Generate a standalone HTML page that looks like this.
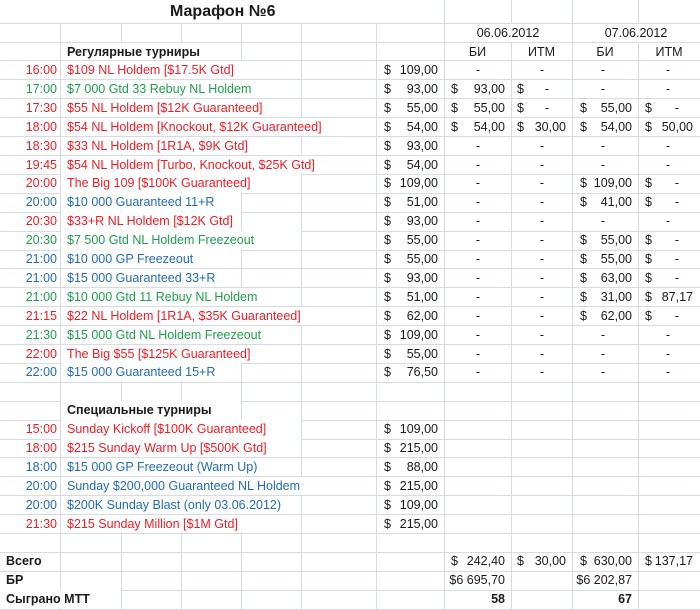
<!DOCTYPE html>
<html><head><meta charset="utf-8"><style>
*{margin:0;padding:0}
body{width:700px;height:610px;overflow:hidden;background:#fff;position:relative;font-family:"Liberation Sans","DejaVu Sans",sans-serif;font-size:12.5px;color:#1a1a1a}
.vl{position:absolute;top:0;width:1px;height:610px;background:#d6dbe4}
.hl{position:absolute;left:0;width:700px;height:1px;background:#d6dbe4}
.r{position:absolute;left:0;width:700px;height:18.9px}
.r>div{position:absolute;top:0;height:17.9px;line-height:19px;white-space:nowrap}
.w{background:#fff}
.t{left:0;width:57px;text-align:right}
.n{left:67px}
.R{color:#f01c24}.G{color:#1fa04b}.B{color:#236cb5}
.fD{left:384px}.fV{left:376px;width:62px;text-align:right}
.gD{left:451px}.gV{left:444px;width:61px;text-align:right}
.hD{left:517px}.hV{left:511px;width:55px;text-align:right}
.iD{left:580px}.iV{left:572px;width:60px;text-align:right}
.jD{left:645px}.jV{left:638px;width:55px;text-align:right}
.gX{left:473px;width:10px;text-align:center}
.hX{left:537px;width:10px;text-align:center}
.iX{left:598px;width:10px;text-align:center}
.jX{left:663px;width:10px;text-align:center}
.hY{left:542px;width:10px;text-align:center}
.jY{left:672px;width:10px;text-align:center}
.b{font-weight:bold}
</style></head><body>
<div class="vl" style="left:60px"></div><div class="vl" style="left:121px"></div><div class="vl" style="left:181px"></div><div class="vl" style="left:241px"></div><div class="vl" style="left:301px"></div><div class="vl" style="left:376px"></div><div class="vl" style="left:444px"></div><div class="vl" style="left:511px"></div><div class="vl" style="left:572px"></div><div class="vl" style="left:638px"></div>
<div class="hl" style="top:23px"></div><div class="hl" style="top:42px"></div><div class="hl" style="top:60px"></div>
<div class="hl" style="top:79px"></div><div class="hl" style="top:98px"></div><div class="hl" style="top:117px"></div><div class="hl" style="top:136px"></div><div class="hl" style="top:155px"></div><div class="hl" style="top:174px"></div><div class="hl" style="top:193px"></div><div class="hl" style="top:212px"></div><div class="hl" style="top:231px"></div><div class="hl" style="top:250px"></div><div class="hl" style="top:268px"></div><div class="hl" style="top:287px"></div><div class="hl" style="top:306px"></div><div class="hl" style="top:325px"></div><div class="hl" style="top:344px"></div><div class="hl" style="top:363px"></div><div class="hl" style="top:382px"></div><div class="hl" style="top:401px"></div><div class="hl" style="top:420px"></div><div class="hl" style="top:439px"></div><div class="hl" style="top:457px"></div><div class="hl" style="top:476px"></div><div class="hl" style="top:495px"></div><div class="hl" style="top:514px"></div><div class="hl" style="top:533px"></div><div class="hl" style="top:552px"></div><div class="hl" style="top:571px"></div><div class="hl" style="top:590px"></div><div class="hl" style="top:609px"></div>

<!-- title row -->
<div class="w" style="position:absolute;left:0;top:0;width:444px;height:23px"></div>
<div class="b" style="position:absolute;left:170px;top:2px;font-size:16px;line-height:20px">Марафон №6</div>
<!-- row 2 -->
<div class="w" style="position:absolute;left:445px;top:24px;width:126px;height:18px"></div>
<div class="w" style="position:absolute;left:573px;top:24px;width:127px;height:18px"></div>
<div style="position:absolute;left:444px;width:128px;top:24px;line-height:18px;text-align:center">06.06.2012</div>
<div style="position:absolute;left:572px;width:128px;top:24px;line-height:18px;text-align:center">07.06.2012</div>
<!-- row 3 -->
<div class="w" style="position:absolute;left:61px;top:43px;width:180px;height:17px"></div>
<div class="b" style="position:absolute;left:67px;top:43px;line-height:18px">Регулярные турниры</div>
<div style="position:absolute;left:444px;width:67px;top:43px;line-height:18px;text-align:center">БИ</div>
<div style="position:absolute;left:511px;width:61px;top:43px;line-height:18px;text-align:center">ИТМ</div>
<div style="position:absolute;left:572px;width:66px;top:43px;line-height:18px;text-align:center">БИ</div>
<div style="position:absolute;left:638px;width:62px;top:43px;line-height:18px;text-align:center">ИТМ</div>

<div class="r" style="top:61px"><div class="w" style="left:61px;width:240px"></div><div class="t R">16:00</div><div class="n R">$109 NL Holdem [$17.5K Gtd]</div><div class="fD">$</div><div class="fV">109,00</div><div class="gX">-</div><div class="hX">-</div><div class="iX">-</div><div class="jX">-</div></div>
<div class="r" style="top:79.9px"><div class="w" style="left:61px;width:240px"></div><div class="t G">17:00</div><div class="n G">$7 000 Gtd 33 Rebuy NL Holdem</div><div class="fD">$</div><div class="fV">93,00</div><div class="gD">$</div><div class="gV">93,00</div><div class="hD">$</div><div class="hY">-</div><div class="iX">-</div><div class="jX">-</div></div>
<div class="r" style="top:98.8px"><div class="w" style="left:61px;width:240px"></div><div class="t R">17:30</div><div class="n R">$55 NL Holdem [$12K Guaranteed]</div><div class="fD">$</div><div class="fV">55,00</div><div class="gD">$</div><div class="gV">55,00</div><div class="hD">$</div><div class="hY">-</div><div class="iD">$</div><div class="iV">55,00</div><div class="jD">$</div><div class="jY">-</div></div>
<div class="r" style="top:117.7px"><div class="w" style="left:61px;width:315px"></div><div class="t R">18:00</div><div class="n R">$54 NL Holdem [Knockout, $12K Guaranteed]</div><div class="fD">$</div><div class="fV">54,00</div><div class="gD">$</div><div class="gV">54,00</div><div class="hD">$</div><div class="hV">30,00</div><div class="iD">$</div><div class="iV">54,00</div><div class="jD">$</div><div class="jV">50,00</div></div>
<div class="r" style="top:136.6px"><div class="w" style="left:61px;width:240px"></div><div class="t R">18:30</div><div class="n R">$33 NL Holdem [1R1A, $9K Gtd]</div><div class="fD">$</div><div class="fV">93,00</div><div class="gX">-</div><div class="hX">-</div><div class="iX">-</div><div class="jX">-</div></div>
<div class="r" style="top:155.5px"><div class="w" style="left:61px;width:315px"></div><div class="t R">19:45</div><div class="n R">$54 NL Holdem [Turbo, Knockout, $25K Gtd]</div><div class="fD">$</div><div class="fV">54,00</div><div class="gX">-</div><div class="hX">-</div><div class="iX">-</div><div class="jX">-</div></div>
<div class="r" style="top:174.4px"><div class="w" style="left:61px;width:240px"></div><div class="t R">20:00</div><div class="n R">The Big 109 [$100K Guaranteed]</div><div class="fD">$</div><div class="fV">109,00</div><div class="gX">-</div><div class="hX">-</div><div class="iD">$</div><div class="iV">109,00</div><div class="jD">$</div><div class="jY">-</div></div>
<div class="r" style="top:193.3px"><div class="w" style="left:61px;width:180px"></div><div class="t B">20:00</div><div class="n B">$10 000 Guaranteed 11+R</div><div class="fD">$</div><div class="fV">51,00</div><div class="gX">-</div><div class="hX">-</div><div class="iD">$</div><div class="iV">41,00</div><div class="jD">$</div><div class="jY">-</div></div>
<div class="r" style="top:212.2px"><div class="w" style="left:61px;width:180px"></div><div class="t R">20:30</div><div class="n R">$33+R NL Holdem [$12K Gtd]</div><div class="fD">$</div><div class="fV">93,00</div><div class="gX">-</div><div class="hX">-</div><div class="iX">-</div><div class="jX">-</div></div>
<div class="r" style="top:231.1px"><div class="w" style="left:61px;width:240px"></div><div class="t G">20:30</div><div class="n G">$7 500 Gtd NL Holdem Freezeout</div><div class="fD">$</div><div class="fV">55,00</div><div class="gX">-</div><div class="hX">-</div><div class="iD">$</div><div class="iV">55,00</div><div class="jD">$</div><div class="jY">-</div></div>
<div class="r" style="top:250px"><div class="w" style="left:61px;width:180px"></div><div class="t B">21:00</div><div class="n B">$10 000 GP Freezeout</div><div class="fD">$</div><div class="fV">55,00</div><div class="gX">-</div><div class="hX">-</div><div class="iD">$</div><div class="iV">55,00</div><div class="jD">$</div><div class="jY">-</div></div>
<div class="r" style="top:268.9px"><div class="w" style="left:61px;width:180px"></div><div class="t B">21:00</div><div class="n B">$15 000 Guaranteed 33+R</div><div class="fD">$</div><div class="fV">93,00</div><div class="gX">-</div><div class="hX">-</div><div class="iD">$</div><div class="iV">63,00</div><div class="jD">$</div><div class="jY">-</div></div>
<div class="r" style="top:287.8px"><div class="w" style="left:61px;width:240px"></div><div class="t G">21:00</div><div class="n G">$10 000 Gtd 11 Rebuy NL Holdem</div><div class="fD">$</div><div class="fV">51,00</div><div class="gX">-</div><div class="hX">-</div><div class="iD">$</div><div class="iV">31,00</div><div class="jD">$</div><div class="jV">87,17</div></div>
<div class="r" style="top:306.7px"><div class="w" style="left:61px;width:315px"></div><div class="t R">21:15</div><div class="n R">$22 NL Holdem [1R1A, $35K Guaranteed]</div><div class="fD">$</div><div class="fV">62,00</div><div class="gX">-</div><div class="hX">-</div><div class="iD">$</div><div class="iV">62,00</div><div class="jD">$</div><div class="jY">-</div></div>
<div class="r" style="top:325.6px"><div class="w" style="left:61px;width:240px"></div><div class="t G">21:30</div><div class="n G">$15 000 Gtd NL Holdem Freezeout</div><div class="fD">$</div><div class="fV">109,00</div><div class="gX">-</div><div class="hX">-</div><div class="iX">-</div><div class="jX">-</div></div>
<div class="r" style="top:344.5px"><div class="w" style="left:61px;width:240px"></div><div class="t R">22:00</div><div class="n R">The Big $55 [$125K Guaranteed]</div><div class="fD">$</div><div class="fV">55,00</div><div class="gX">-</div><div class="hX">-</div><div class="iX">-</div><div class="jX">-</div></div>
<div class="r" style="top:363.4px"><div class="w" style="left:61px;width:180px"></div><div class="t B">22:00</div><div class="n B">$15 000 Guaranteed 15+R</div><div class="fD">$</div><div class="fV">76,50</div><div class="gX">-</div><div class="hX">-</div><div class="iX">-</div><div class="jX">-</div></div>

<div class="r" style="top:401.2px"><div class="w" style="left:61px;width:180px"></div><div class="n b">Специальные турниры</div></div>
<div class="r" style="top:420.1px"><div class="w" style="left:61px;width:240px"></div><div class="t R">15:00</div><div class="n R">Sunday Kickoff [$100K Guaranteed]</div><div class="fD">$</div><div class="fV">109,00</div></div>
<div class="r" style="top:439px"><div class="w" style="left:61px;width:240px"></div><div class="t R">18:00</div><div class="n R">$215 Sunday Warm Up [$500K Gtd]</div><div class="fD">$</div><div class="fV">215,00</div></div>
<div class="r" style="top:457.9px"><div class="w" style="left:61px;width:240px"></div><div class="t B">18:00</div><div class="n B">$15 000 GP Freezeout (Warm Up)</div><div class="fD">$</div><div class="fV">88,00</div></div>
<div class="r" style="top:476.8px"><div class="w" style="left:61px;width:315px"></div><div class="t B">20:00</div><div class="n B">Sunday $200,000 Guaranteed NL Holdem</div><div class="fD">$</div><div class="fV">215,00</div></div>
<div class="r" style="top:495.7px"><div class="w" style="left:61px;width:240px"></div><div class="t B">20:00</div><div class="n B">$200K Sunday Blast (only 03.06.2012)</div><div class="fD">$</div><div class="fV">109,00</div></div>
<div class="r" style="top:514.6px"><div class="w" style="left:61px;width:240px"></div><div class="t R">21:30</div><div class="n R">$215 Sunday Million [$1M Gtd]</div><div class="fD">$</div><div class="fV">215,00</div></div>

<div class="r" style="top:552.4px"><div class="b" style="left:6px">Всего</div><div class="gD">$</div><div class="gV">242,40</div><div class="hD">$</div><div class="hV">30,00</div><div class="iD">$</div><div class="iV">630,00</div><div class="jD">$</div><div class="jV">137,17</div></div>
<div class="r" style="top:571.3px"><div class="b" style="left:6px">БР</div><div class="gV">$6 695,70</div><div class="iV">$6 202,87</div></div>
<div class="r" style="top:590.2px"><div class="w" style="left:0;width:121px"></div><div class="b" style="left:6px">Сыграно МТТ</div><div class="gV b">58</div><div class="iV b">67</div></div>
</body></html>
